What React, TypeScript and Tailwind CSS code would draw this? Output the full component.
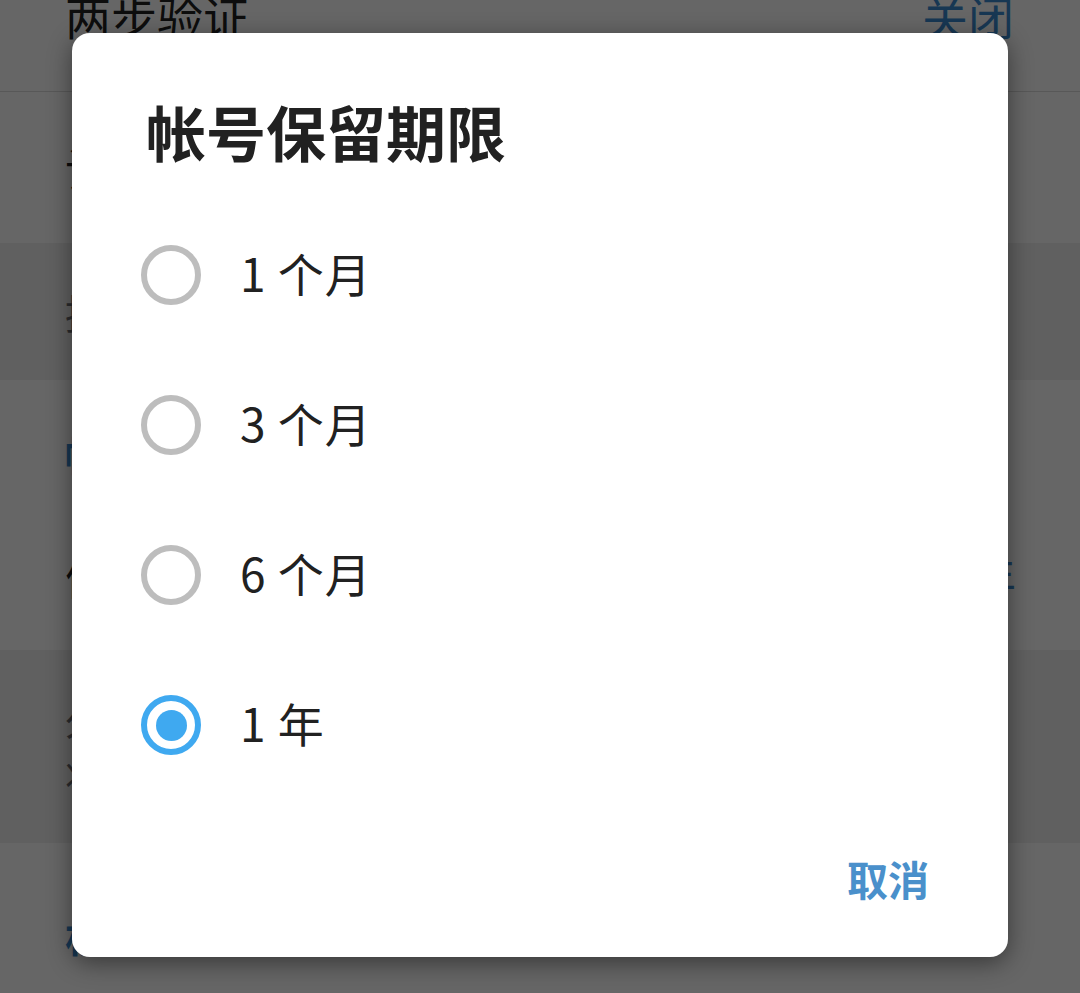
import { useState } from "react";

const options = ["1 个月", "3 个月", "6 个月", "1 年"];

const Radio = ({ checked }: { checked: boolean }) => {
  return (
    <div
      className={
        checked
          ? "w-[60px] h-[60px] rounded-full border-[6px] border-[#3fa9f0] flex items-center justify-center shrink-0"
          : "w-[60px] h-[60px] rounded-full border-[6px] border-[#bdbdbd] flex items-center justify-center shrink-0"
      }
    >
      {checked && <div className="w-[31px] h-[31px] rounded-full bg-[#3fa9f0]" />}
    </div>
  );
};

const App = () => {
  const [selected, setSelected] = useState(3);

  return (
    <div className="relative w-[1080px] h-[993px] overflow-hidden font-['Noto_Sans_CJK_SC',sans-serif]">
      {/* settings page behind the dialog */}
      <div className="flex flex-col -mt-[60px] bg-white">
        <div className="h-[152px] flex items-center justify-between pl-[65px] pr-[66px] border-b border-[#dddddd]">
          <span className="text-[46px] text-[#222222]">两步验证</span>
          <span className="text-[46px] text-[#3a8bd0]">关闭</span>
        </div>
        <div className="h-[151px] flex items-center pl-[65px]">
          <span className="text-[46px] text-[#222222]">设备与会话</span>
        </div>
        <div className="h-[137px] flex items-center pl-[65px] bg-[#f0f0f0]">
          <span className="text-[40px] text-[#6d6d72]">控制您的帐号在哪些设备上登录。</span>
        </div>
        <div className="h-[120px] flex items-end pb-[16px] pl-[65px]">
          <span className="text-[40px] font-bold text-[#3a8bd0]">帐号自毁</span>
        </div>
        <div className="h-[150px] flex items-center justify-between pl-[65px] pr-[64px]">
          <span className="text-[46px] text-[#222222]">倘若离线时间超过</span>
          <span className="text-[46px] text-[#3a8bd0]">1 年</span>
        </div>
        <div className="h-[193px] flex flex-col justify-center pl-[65px] bg-[#f0f0f0] text-[40px] leading-[57px] text-[#6d6d72]">
          <span>久未上线，您的帐号及所有消息和联系人</span>
          <span>将会被删除。</span>
        </div>
        <div className="h-[200px] pt-[62px] pl-[65px]">
          <span className="text-[40px] font-bold text-[#3a8bd0]">机器人与网站</span>
        </div>
      </div>

      {/* overlay */}
      <div className="absolute inset-0 bg-black/60 flex items-center justify-center">
        <div className="w-[936px] h-[924px] -mt-[3px] bg-white rounded-[18px] shadow-[0_6px_24px_rgba(0,0,0,0.45)] flex flex-col px-[69px]">
          <h2 className="mt-[64px] ml-[5px] h-[68px] text-[60px] leading-[68px] font-bold text-[#212121]">
            帐号保留期限
          </h2>
          <div className="mt-[35px] flex flex-col">
            {options.map((opt, i) => (
              <button
                key={opt}
                onClick={() => setSelected(i)}
                className="h-[150px] flex items-center gap-[39px] text-left"
              >
                <Radio checked={selected === i} />
                <span className="text-[46px] leading-[56px] pb-[6px] text-[#212121] tracking-[1px]">{opt}</span>
              </button>
            ))}
          </div>
          <div className="mt-[53px] flex justify-end pr-[10px]">
            <button className="h-[50px] text-[41px] leading-[50px] font-bold text-[#4a90cb]">取消</button>
          </div>
        </div>
      </div>
    </div>
  );
};

export default App;
